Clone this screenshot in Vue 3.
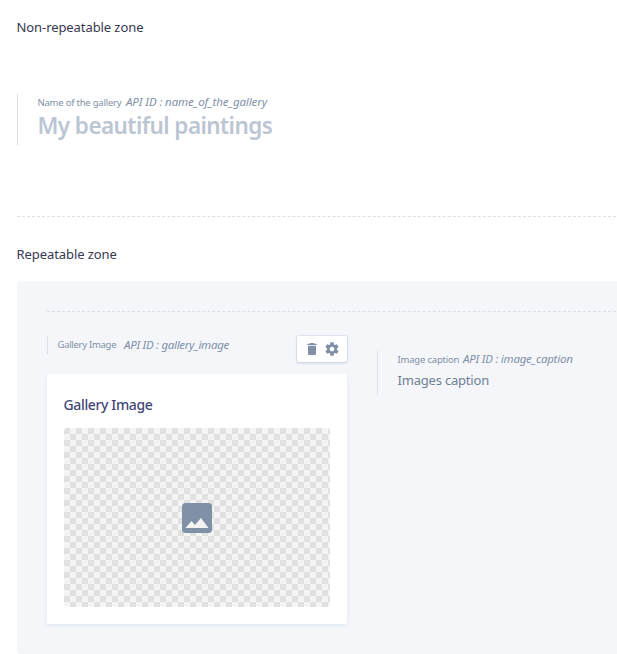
<script setup>
const nameField = { label: 'Name of the gallery', api: 'name_of_the_gallery', value: 'My beautiful paintings' }
const imageField = { label: 'Gallery Image', api: 'gallery_image' }
const captionField = { label: 'Image caption', api: 'image_caption', value: 'Images caption' }
</script>

<template>
  <main class="page">
    <h2 class="zone-title first"><span>Non-repeatable zone</span></h2>
    <section class="field name-field">
      <div class="meta">
        <span class="label l-name">{{ nameField.label }}</span>
        <em class="api a-name">API ID : {{ nameField.api }}</em>
      </div>
      <div class="heading"><span>{{ nameField.value }}</span></div>
    </section>
    <hr class="divider" />
    <h2 class="zone-title second"><span>Repeatable zone</span></h2>
    <section class="zone">
      <hr class="divider inner" />
      <div class="columns">
        <div class="image-col">
          <div class="image-head">
            <div class="image-meta">
              <span class="label l-image">{{ imageField.label }}</span>
              <em class="api a-image">API ID : {{ imageField.api }}</em>
            </div>
            <div class="tools">
              <svg class="tool" viewBox="0 0 24 24"><path d="M6 19c0 1.1.9 2 2 2h8c1.100 0 2-.9 2-2V7H6v12zM19 4h-3.500l-1-1h-5l-1 1H5v2h14V4z" /></svg>
              <svg class="tool" viewBox="0 0 24 24"><path d="M19.430 12.980c.040-.320.070-.640.070-.980s-.030-.660-.070-.980l2.110-1.650c.190-.150.240-.420.120-.640l-2-3.460c-.120-.220-.390-.300-.610-.220l-2.490 1c-.520-.400-1.080-.730-1.690-.980l-.380-2.650C14.460 2.180 14.250 2 14 2h-4c-.250 0-.460.180-.490.420l-.380 2.650c-.610.250-1.170.590-1.690.980l-2.490-1c-.230-.090-.490 0-.610.220l-2 3.460c-.130.220-.070.490.120.640l2.110 1.650c-.040.320-.070.650-.070.980s.030.660.070.980l-2.110 1.650c-.190.150-.240.420-.120.640l2 3.460c.120.220.390.300.610.220l2.490-1c.520.400 1.080.730 1.690.980l.380 2.650c.030.240.240.420.490.420h4c.250 0 .460-.180.490-.420l.380-2.650c.610-.250 1.170-.590 1.690-.980l2.490 1c.230.090.490 0 .610-.220l2-3.460c.120-.220.070-.490-.120-.640l-2.110-1.650zM12 15.500c-1.930 0-3.500-1.570-3.500-3.500s1.570-3.500 3.500-3.500 3.500 1.570 3.500 3.500-1.570 3.500-3.500 3.500z" /></svg>
            </div>
          </div>
          <article class="card">
            <h3 class="card-title"><span>Gallery Image</span></h3>
            <div class="placeholder">
              <svg class="picture" viewBox="0 0 30 30">
                <rect width="30" height="30" rx="3.500" fill="#8091a7" />
                <path d="M3.500 25 9.500 18 13 22 19 15 26.500 25Z" fill="#f3f3f4" />
              </svg>
            </div>
          </article>
        </div>
        <div class="field caption-field">
          <div class="meta">
            <span class="label l-caption">{{ captionField.label }}</span>
            <em class="api a-caption">API ID : {{ captionField.api }}</em>
          </div>
          <div class="caption"><span>{{ captionField.value }}</span></div>
        </div>
      </div>
    </section>
  </main>
</template>

<style>
body { background: #fff; overflow: hidden; }
</style>

<style scoped>
.page {
  box-sizing: border-box;
  width: 617px;
  height: 654px;
  padding: 17px 0 0 17px;
  overflow: hidden;
  font-family: "Noto Sans", "Open Sans", sans-serif;
  white-space: nowrap;
}
.zone-title {
  margin: 0 0 0 -0.500px;
  height: 20px;
  line-height: 20px;
  font-size: 13px;
  font-weight: 400;
  letter-spacing: -0.080px;
  color: #373950;
}
.field { box-sizing: border-box; border-left: 1px solid #dcdfe6; padding-left: 19.500px; }
.name-field { height: 51px; margin-top: 57px; }
.meta { display: flex; height: 16px; line-height: 16px; }
.label { font-size: 9.500px; letter-spacing: -0.220px; color: #8091a7; line-height: 17px; }
.api { font-size: 11.500px; color: #8091a7; line-height: 16px; }
.a-name { letter-spacing: -0.100px; }
.a-image { letter-spacing: -0.290px; line-height: 17px; }
.a-caption { letter-spacing: -0.240px; }
.l-name { width: 88.500px; }
.heading {
  height: 30px;
  line-height: 32px;
  font-size: 22.500px;
  font-weight: 600;
  letter-spacing: -0.570px;
  color: #bcc6d3;
}
.divider { width: 599px; margin: 71px 0 0; border: 0; border-top: 1px dashed #dcdfe6; }
.second { margin-top: 27px; }
.zone {
  box-sizing: border-box;
  height: 373px;
  margin-top: 17px;
  padding: 30px 0 0 30px;
  background: #f4f6fa;
  border-radius: 4px 0 0 4px;
}
.inner { width: 569px; margin: 0; }
.columns { display: flex; gap: 30px; padding-top: 24px; }
.image-col { width: 300px; }
.image-head { display: flex; justify-content: space-between; }
.image-meta {
  display: flex;
  height: 18px;
  padding-left: 9.500px;
  border-left: 1px solid #dcdfe6;
}
.l-image { width: 66.500px; line-height: 18px; letter-spacing: -0.280px; }
.l-caption { width: 65.500px; letter-spacing: -0.200px; }
.tools {
  box-sizing: border-box;
  display: flex;
  gap: 4px;
  width: 50px;
  height: 26px;
  padding: 5px 7px;
  background: #fff;
  border-radius: 2px;
  box-shadow: 0 1px 3px rgba(110, 140, 175, 0.3), 0 0 0 1px rgba(130, 160, 200, 0.14);
}
.tool { width: 16px; height: 16px; fill: #8091a7; }
.card {
  box-sizing: border-box;
  height: 250px;
  margin-top: 12px;
  padding: 17px;
  background: #fff;
  border-radius: 2px;
  box-shadow: 0 2px 4px rgba(130, 160, 200, 0.16);
}
.card-title {
  margin: 0 0 0 -0.500px;
  height: 37px;
  line-height: 28px;
  font-size: 14px;
  font-weight: 500;
  letter-spacing: -0.360px;
  color: #43467a;
}
.placeholder {
  display: flex;
  align-items: center;
  justify-content: center;
  height: 179px;
  border-radius: 3px;
  background: repeating-conic-gradient(#f4f4f4 0 25%, #e1e1e1 0 50%) 0 0 / 12px 12px;
}
.picture { width: 30px; height: 30px; }
.caption-field { height: 44px; margin-top: 15px; }
.caption {
  height: 24px;
  line-height: 26px;
  font-size: 13px;
  letter-spacing: -0.200px;
  color: #6f7f94;
}
</style>
